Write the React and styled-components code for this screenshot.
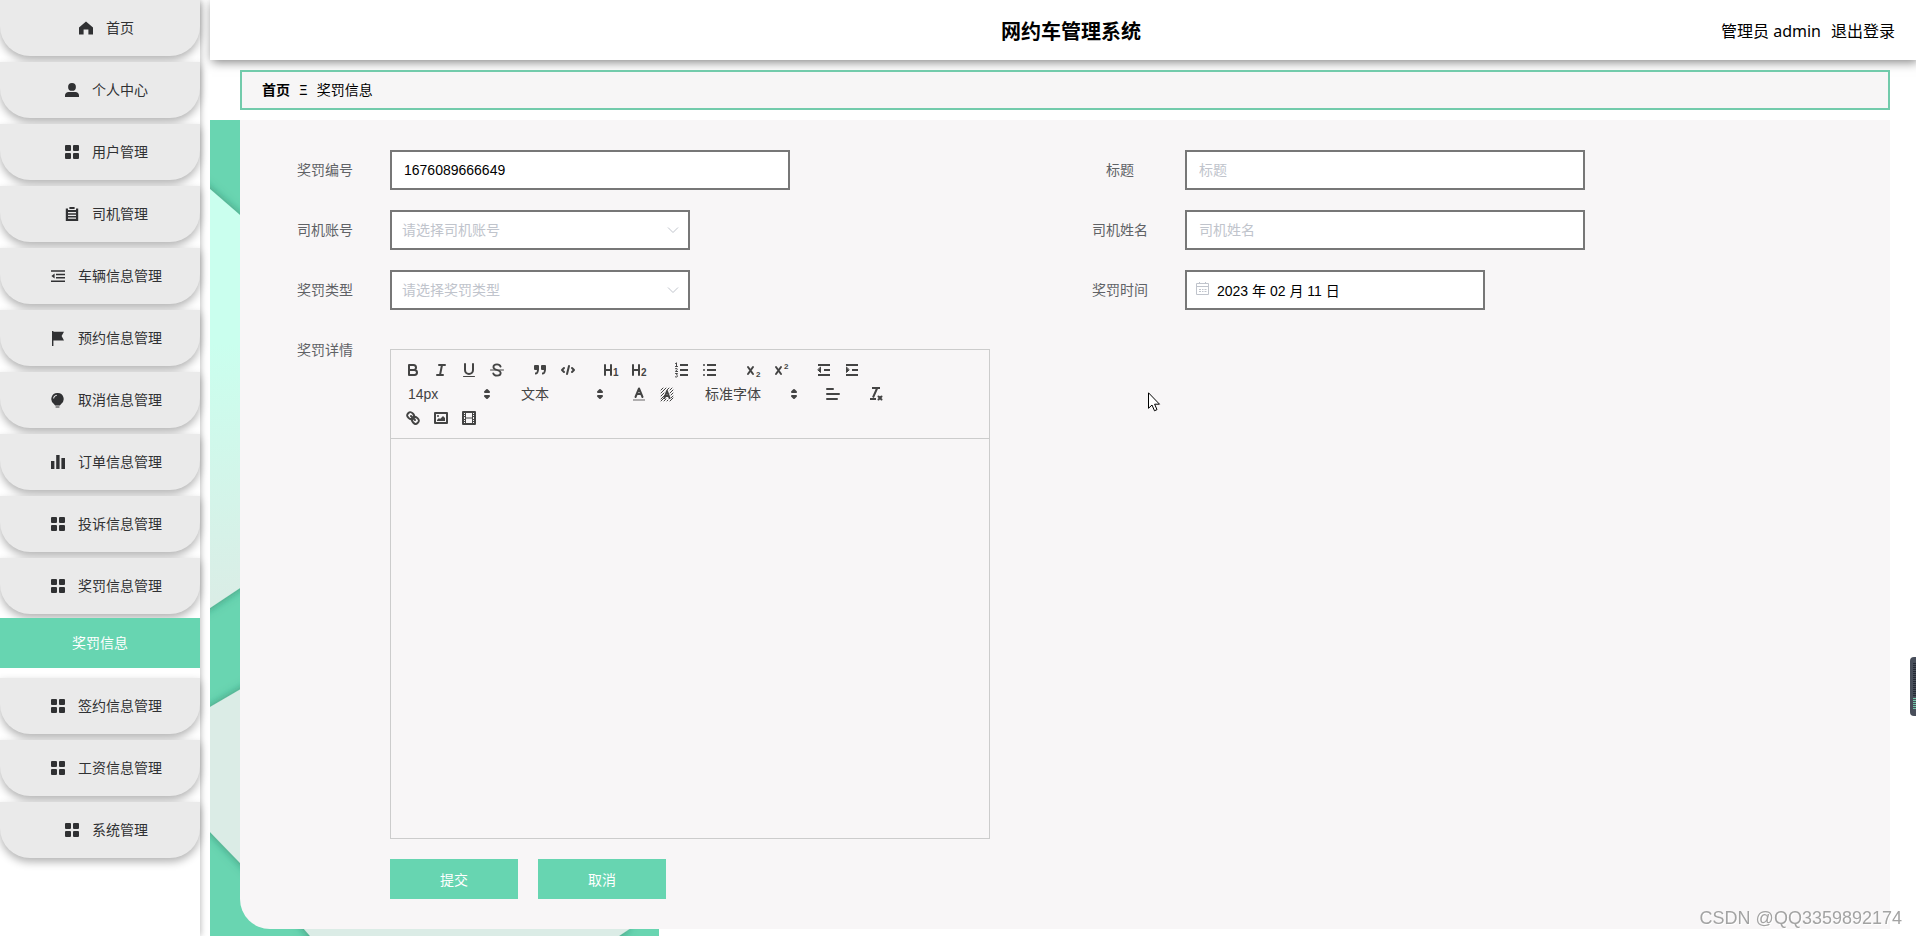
import { useState } from 'react';
import styled, { createGlobalStyle } from 'styled-components';

const GlobalStyle = createGlobalStyle`
    * {
        box-sizing: border-box;
    }
    body {
        margin: 0;
        background: #fff;
        font-family: "Noto Sans", "Noto Sans CJK SC", sans-serif;
        font-size: 14px;
        color: #000;
    }
    button, input, select, textarea {
        font-family: "Liberation Sans", "Noto Sans CJK SC", sans-serif;
        font-size: 14px;
    }
`;

const Page = styled.div`
    display: flex;
    min-height: 100vh;
    overflow: hidden;
`;

const Sidebar = styled.nav`
    width: 200px;
    flex-shrink: 0;
    margin-right: 10px;
    background: #fff;
    box-shadow: 1px 0 6px rgba(0, 0, 0, 0.25);
`;

const Menu = styled.ul`
    list-style: none;
    margin: 0;
    padding: 0;
`;

const MenuItem = styled.li`
    display: flow-root;
    margin-bottom: 6px;
`;

const MenuLink = styled.a`
    display: flex;
    align-items: center;
    justify-content: center;
    gap: 8px;
    height: 56px;
    padding: 0 12px 2px 20px;
    position: relative;
    border-radius: 0 0 30px 30px;
    background: #eaeaea;
    box-shadow: 0 4px 8px rgba(0, 0, 0, 0.3);
    color: #303133;
    text-decoration: none;
`;

const MenuIcon = styled.span`
    display: flex;
    justify-content: center;
    width: 24px;
    padding-top: 2px;
`;

const SubLink = styled.a`
    display: flex;
    align-items: center;
    justify-content: center;
    height: 50px;
    margin: 4px 0;
    padding-bottom: 2px;
    position: relative;
    background: #67d5b1;
    color: #fff;
    text-decoration: none;
`;

const Main = styled.div`
    flex: 1;
    min-width: 0;
    display: flex;
    flex-direction: column;
`;

const Header = styled.header`
    display: grid;
    grid-template-columns: 1fr auto 1fr;
    align-items: center;
    height: 60px;
    padding: 0 21px 0 37px;
    background: #fff;
    box-shadow: 2px 2px 10px rgba(0, 0, 0, 0.5);
    font-size: 16px;
`;

const Title = styled.h1`
    grid-column: 2;
    margin: 0;
    font-size: 20px;
    font-weight: bold;
`;

const UserBox = styled.div`
    display: flex;
    justify-content: flex-end;
    gap: 10px;
    padding-bottom: 1px;
`;

const Logout = styled.a`
    color: #000;
    text-decoration: none;
`;

const Breadcrumb = styled.div`
    display: flex;
    align-items: center;
    height: 40px;
    margin: 10px 26px 10px 30px;
    padding: 0 20px 2px;
    border: 2px solid #72cbab;
    background: #f7f6f6;
`;

const Home = styled.a`
    color: #000;
    font-weight: bold;
    text-decoration: none;
`;

const Separator = styled.span`
    margin: 0 9px;
`;

const Content = styled.main`
    flex: 1;
    position: relative;
    padding: 0 26px 7px 30px;
`;

const Wallpaper = styled.svg`
    position: absolute;
    top: 0;
    left: 0;
    width: 449px;
    height: 100%;
`;

const Card = styled.form`
    position: relative;
    padding: 30px;
    border-radius: 0 0 0 30px;
    background: #f8f6f7;
`;

const Grid = styled.div`
    display: grid;
    grid-template-columns: 1fr 1fr;
    row-gap: 20px;
`;

const Field = styled.div`
    display: flex;
    align-items: flex-start;
`;

const Label = styled.label`
    width: 120px;
    padding-right: 10px;
    flex-shrink: 0;
    line-height: 40px;
    text-align: center;
    color: #606266;
`;

const Control = styled.div`
    display: flex;
    align-items: center;
    width: ${(props) => props.$wide ? "400px" : "300px"};
    height: 40px;
    position: relative;
    border: 2px solid #777;
    background: #fff;
`;

const Input = styled.input`
    width: 100%;
    height: 36px;
    padding: 0 12px;
    padding-left: ${(props) => props.$icon ? "30px" : "12px"};
    border: 0;
    outline: 0;
    background: transparent;
    color: #000;
    &::placeholder {
        color: #c0c4cc;
    }
`;

const Select = styled.select`
    width: 100%;
    height: 36px;
    padding: 0 10px;
    appearance: none;
    border: 0;
    outline: 0;
    background: transparent;
    color: #c0c4cc;
`;

const ControlIcon = styled.span`
    display: flex;
    position: absolute;
    top: ${(props) => props.$side === "left" ? "10px" : "12px"};
    left: ${(props) => props.$side === "left" && "9px"};
    right: ${(props) => props.$side === "right" && "9px"};
    color: #c0c4cc;
    pointer-events: none;
`;

const Editor = styled.div`
    width: 600px;
    margin-top: 19px;
    border: 1px solid #ccc;
`;

const Toolbar = styled.div`
    display: flex;
    flex-wrap: wrap;
    padding: 8px 0 8px 8px;
    border-bottom: 1px solid #ccc;
`;

const Formats = styled.span`
    display: flex;
    margin-right: 15px;
`;

const Tool = styled.button`
    width: 28px;
    height: 24px;
    padding: 3px 5px;
    border: 0;
    background: none;
    cursor: pointer;
    svg {
        display: block;
    }
`;

const Picker = styled.span`
    display: flex;
    align-items: center;
    width: ${(props) => props.$wide ? "108px" : "98px"};
    height: 24px;
    position: relative;
    svg {
        position: absolute;
        right: 1px;
        pointer-events: none;
    }
`;

const PickerSelect = styled.select`
    width: 100%;
    height: 24px;
    padding: 0 9px;
    appearance: none;
    border: 0;
    outline: 0;
    background: transparent;
    color: #444;
`;

const EditArea = styled.textarea`
    display: block;
    width: 100%;
    height: 399px;
    padding: 12px 15px;
    border: 0;
    outline: 0;
    resize: none;
    background: transparent;
`;

const Actions = styled.div`
    display: flex;
    gap: 20px;
    margin: 20px 0 0 120px;
`;

const Button = styled.button`
    width: 128px;
    height: 40px;
    border: 0;
    background: #67d5b1;
    color: #fff;
    cursor: pointer;
`;

const Watermark = styled.div`
    position: fixed;
    right: 14px;
    bottom: 6px;
    font-family: "Liberation Sans", sans-serif;
    font-size: 18px;
    line-height: 24px;
    color: #a3a3a3;
    text-shadow: 1px 1px 0 #fff;
`;

const Gauge = styled.svg`
    position: fixed;
    right: 0;
    top: 657px;
`;

const Pointer = styled.svg`
    position: fixed;
    left: 1148px;
    top: 392px;
    pointer-events: none;
`;

const icons = {
    home: <path d="M7 0.4 14 6.4V13.4H9.4V8.6H4.6V13.4H0V6.4Z" />,
    user: <path d="M7 0a3.9 3.9 0 1 1 0 7.8A3.9 3.9 0 0 1 7 0ZM0 14v-1.500C0 10.200 1.600 9 3.600 9h6.800c2 0 3.600 1.200 3.600 3.500V14Z" />,
    menu: <path d="M1 0h4q1 0 1 1v4q0 1-1 1H1Q0 6 0 5V1Q0 0 1 0ZM9 0h4q1 0 1 1v4q0 1-1 1H9Q8 6 8 5V1Q8 0 9 0ZM1 8h4q1 0 1 1v4q0 1-1 1H1q-1 0-1-1V9q0-1 1-1ZM9 8h4q1 0 1 1v4q0 1-1 1H9q-1 0-1-1V9q0-1 1-1Z" />,
    order: <path fillRule="evenodd" d="M.8 1.4H3V3h8V1.4h2.2V14H.8ZM4.4 0h5.2v2H4.4ZM3 5v1.2h8V5ZM3 7.8V9h8V7.8ZM3 10.6v1.2h8v-1.2Z" />,
    fold: <path d="M0 1.2h14v1.6H0ZM5 4.7h9v1.6H5ZM5 8h9v1.6H5ZM0 11.4h14V13H0ZM3.6 4.6v5L.4 7.1Z" />,
    flag: <path d="M1 0h1.4v.8H13L10.6 5 13 9.4H2.4V15H1Z" />,
    bulb: <path fillRule="evenodd" d="M6.5 0a6 6 0 0 1 3.6 10.9L8.9 12.6H4.1L2.9 10.9A6 6 0 0 1 6.5 0ZM5.8 1.8C3.7 2 2.3 3.5 2.1 5.5l1 .1C3.3 4 4.3 3 5.9 2.8ZM4.6 13.6h3.8v1H4.6Z" />,
    data: <path d="M0 6h3.4v8H0ZM5.2 0h3.4v14H5.2ZM10.4 3H14v11h-3.6Z" />,
};

const menus = [
    { text: '首页', icon: 'home' },
    { text: '个人中心', icon: 'user' },
    { text: '用户管理', icon: 'menu' },
    { text: '司机管理', icon: 'order' },
    { text: '车辆信息管理', icon: 'fold' },
    { text: '预约信息管理', icon: 'flag' },
    { text: '取消信息管理', icon: 'bulb' },
    { text: '订单信息管理', icon: 'data' },
    { text: '投诉信息管理', icon: 'menu' },
    { text: '奖罚信息管理', icon: 'menu', child: '奖罚信息' },
    { text: '签约信息管理', icon: 'menu' },
    { text: '工资信息管理', icon: 'menu' },
    { text: '系统管理', icon: 'menu' },
];

const ToolSvg = ({ children }) => (
    <svg width="18" height="18" viewBox="0 0 18 18" fill="none" stroke="#444" strokeWidth="2" strokeLinecap="round" strokeLinejoin="round">
        {children}
    </svg>
);

const SmallText = ({ x, y, size = 8, children }) => (
    <text x={x} y={y} fill="#444" stroke="none" fontSize={size} fontWeight="bold" fontFamily="Liberation Sans, sans-serif">{children}</text>
);

const indentLines = <path strokeLinecap="butt" d="M3 14H15M3 4H15M9 9H15" />;

const tools = {
    bold: <path d="M5 4H9.5a2.5 2.5 0 0 1 0 5H5ZM5 9h5.5a2.5 2.5 0 0 1 0 5H5Z" />,
    italic: <path d="M7 4H13M5 14H11M8 14 10 4" />,
    underline: <><path d="M5 3V9a4 4 0 0 0 8 0V3" /><path strokeWidth="1" d="M3.5 15.5h11" /></>,
    strike: <><path strokeWidth="1" d="M2.5 9h13" /><path strokeWidth="1.8" d="M12.6 5.6C12 3.9 10.8 3.4 9 3.4 6.8 3.4 5.4 4.4 5.4 6c0 1.7 1.6 2.4 3.6 3s3.7 1.3 3.7 3c0 1.8-1.6 2.7-3.7 2.7S5.6 13.9 5.2 12.3" /></>,
    quote: <><rect fill="#444" x="4" y="5" width="3" height="3" /><rect fill="#444" x="11" y="5" width="3" height="3" /><path strokeLinecap="butt" d="M7 8c0 4-1 4.500-3 4.500M14 8c0 4-1 4.500-3 4.500" /></>,
    code: <path d="M5 7 3 9 5 11M13 7 15 9 13 11M10 5 8 13" />,
    h1: <><path d="M3 4V14M9 4V14M3 9H9" /><SmallText x="11" y="15" size="10">1</SmallText></>,
    h2: <><path d="M3 4V14M9 4V14M3 9H9" /><SmallText x="11" y="15" size="10">2</SmallText></>,
    ordered: <><path strokeLinecap="butt" d="M7 4H15M7 9H15M7 14H15" /><path strokeWidth="1" d="M2.5 2.5 3.5 1.8V5.5M2.5 5.5H4.5M2.5 7.6Q4.5 6.8 4.3 8.3L2.5 10.5H4.6M2.5 12.5H4.5L3.5 14Q4.9 14.5 4.3 15.6 3.5 16.5 2.4 15.9" /></>,
    bullet: <><path strokeLinecap="butt" d="M6 4H15M6 9H15M6 14H15" /><path d="M3 4h0M3 9h0M3 14h0" /></>,
    sub: <><path d="M4 6 9 13M9 6 4 13" /><SmallText x="12" y="16">2</SmallText></>,
    sup: <><path d="M4 6 9 13M9 6 4 13" /><SmallText x="12" y="8">2</SmallText></>,
    outdent: <>{indentLines}<path fill="#444" strokeWidth="1" d="M5.5 6.5V11.5L3 9Z" /></>,
    indent: <>{indentLines}<path fill="#444" strokeWidth="1" d="M3.5 6.5V11.5L6 9Z" /></>,
    color: <><path strokeWidth="2" strokeLinecap="butt" opacity="0.4" d="M3 15H15" /><path d="M5.5 12 9 3.5 12.5 12M6.8 9H11.2" /></>,
    background: <>
        <path strokeWidth="1" d="M3 5 5 3M3 8 8 3M3 11 6 8M9 5 11 3M3 14 7 10M12 5 14 3M3 16 6 13M12 8 15 5M6 16 8 14M13 10 15 8M9 16 10 15M13 13 15 11M12 16 15 13" />
        <path d="M6.500 13 9 6 11.500 13M7.500 11H10.500" />
    </>,
    align: <path d="M3 9H15M3 14H13M3 4H9" />,
    clean: <><path strokeLinecap="butt" d="M5 3H13M6 12.500 10 3.500M3 14H9" /><path d="M11.500 11.500 14.500 14.500M14.500 11.500 11.500 14.500" /></>,
    link: <>
        <path d="M7 7 11 11" />
        <path d="M8.9 4.577a3.476 3.476 0 0 1 .36 4.679A3.476 3.476 0 0 1 4.577 8.900C3.185 7.500 2.035 6.400 4.217 4.217S7.500 3.185 8.900 4.577Z" />
        <path d="M13.423 9.100a3.476 3.476 0 0 0-4.679-.36 3.476 3.476 0 0 0 .36 4.679c1.392 1.392 2.500 2.542 4.679.36S14.815 10.500 13.423 9.100Z" />
    </>,
    image: <><rect x="3" y="4" width="12" height="10" /><circle fill="#444" stroke="none" cx="6" cy="7" r="1" /><path fill="#444" stroke="none" d="M5 12V11L7 9 8 10 11 7 13 9V12Z" /></>,
    video: <><rect x="3" y="3" width="12" height="12" /><path strokeLinecap="butt" d="M5.500 3V15M12.500 3V15M5 9H13" strokeWidth="1" /><path strokeWidth="1" strokeLinecap="butt" d="M3 5.500H6M3 7.500H6M3 10.500H6M3 12.500H6M12 5.500H15M12 7.500H15M12 10.500H15M12 12.500H15" /></>,
};

const Tools = ({ names }) => (
    <Formats>
        {names.map((name) => (
            <Tool key={name} type="button" aria-label={name}>
                <ToolSvg>{tools[name]}</ToolSvg>
            </Tool>
        ))}
    </Formats>
);

const ToolPicker = ({ label, text, wide }) => (
    <Formats>
        <Picker $wide={wide}>
            <PickerSelect aria-label={label}>
                <option>{text}</option>
            </PickerSelect>
            <ToolSvg>
                <path fill="#444" d="M7 11 9 13 11 11ZM7 7 9 5 11 7Z" />
            </ToolSvg>
        </Picker>
    </Formats>
);

const TextField = ({ id, label, value }) => {
    const [text, setText] = useState(value || '');
    return (
        <Field>
            <Label htmlFor={id}>{label}</Label>
            <Control $wide>
                <Input id={id} placeholder={label} value={text} onChange={(e) => setText(e.target.value)} />
            </Control>
        </Field>
    )
}

const SelectField = ({ id, label }) => (
    <Field>
        <Label htmlFor={id}>{label}</Label>
        <Control>
            <Select id={id}>
                <option>请选择{label}</option>
            </Select>
            <ControlIcon $side="right">
                <svg width="12" height="12" viewBox="0 0 12 12" fill="none" stroke="currentColor">
                    <path d="M1 3.500 6 8.500 11 3.500" />
                </svg>
            </ControlIcon>
        </Control>
    </Field>
);

const App = () => {
    const [date, setDate] = useState('2023 年 02 月 11 日');

    return (
        <>
            <GlobalStyle />
            <Page>
                <Sidebar>
                    <Menu>
                        {menus.map((item) => (
                            <MenuItem key={item.text}>
                                <MenuLink href="#">
                                    <MenuIcon>
                                        <svg width="14" height="15" viewBox="0 0 14 15" fill="#303133">{icons[item.icon]}</svg>
                                    </MenuIcon>
                                    {item.text}
                                </MenuLink>
                                {item.child && <SubLink href="#">{item.child}</SubLink>}
                            </MenuItem>
                        ))}
                    </Menu>
                </Sidebar>
                <Main>
                    <Header>
                        <Title>网约车管理系统</Title>
                        <UserBox>
                            <span>管理员 admin</span>
                            <Logout href="#">退出登录</Logout>
                        </UserBox>
                    </Header>
                    <Breadcrumb>
                        <Home href="#">首页</Home>
                        <Separator>Ξ</Separator>
                        <span>奖罚信息</span>
                    </Breadcrumb>
                    <Content>
                        <Wallpaper viewBox="0 0 449 816" preserveAspectRatio="none">
                            <defs>
                                <linearGradient id="mint" x1="0" y1="0" x2="0" y2="1">
                                    <stop offset="0.4" stopColor="#caffee" />
                                    <stop offset="1" stopColor="#dcebe5" />
                                </linearGradient>
                                <filter id="shade" x="-20%" y="-20%" width="140%" height="140%">
                                    <feDropShadow dx="0" dy="0" stdDeviation="5" floodColor="#1d6b53" floodOpacity="0.6" />
                                </filter>
                            </defs>
                            <rect width="449" height="816" fill="#69d5b1" />
                            <g filter="url(#shade)">
                                <path fill="url(#mint)" d="M-40 34 0 69 200 242V355L0 488-40 510Z" />
                                <path fill="#dbece6" d="M-40 610 0 587 60 552 200 640 120 800 60 774 0 712-40 670Z" />
                                <path fill="#dbece6" d="M60 770 100 816V850H370L409 816 421 808 240 700Z" />
                            </g>
                        </Wallpaper>
                        <Card onSubmit={(e) => e.preventDefault()}>
                            <Grid>
                                <TextField id="number" label="奖罚编号" value="1676089666649" />
                                <TextField id="title" label="标题" />
                                <SelectField id="account" label="司机账号" />
                                <TextField id="driver" label="司机姓名" />
                                <SelectField id="type" label="奖罚类型" />
                                <Field>
                                    <Label htmlFor="date">奖罚时间</Label>
                                    <Control>
                                        <ControlIcon $side="left">
                                            <svg width="13" height="13" viewBox="0 0 13 13" fill="none" stroke="currentColor">
                                                <path d="M.5 1.500H12.500V12.500H.5ZM.5 4.500H12.500M3.500 0V2M9.500 0V2M3 7.500H5M6 7.500H7.500M8.500 7.500H10.500M3 9.500H5M6 9.500H7.500M8.500 9.500H10.500" />
                                            </svg>
                                        </ControlIcon>
                                        <Input id="date" $icon value={date} onChange={(e) => setDate(e.target.value)} />
                                    </Control>
                                </Field>
                                <Field>
                                    <Label htmlFor="detail">奖罚详情</Label>
                                    <Editor>
                                        <Toolbar>
                                            <Tools names={['bold', 'italic', 'underline', 'strike']} />
                                            <Tools names={['quote', 'code']} />
                                            <Tools names={['h1', 'h2']} />
                                            <Tools names={['ordered', 'bullet']} />
                                            <Tools names={['sub', 'sup']} />
                                            <Tools names={['outdent', 'indent']} />
                                            <ToolPicker label="size" text="14px" />
                                            <ToolPicker label="header" text="文本" />
                                            <Tools names={['color', 'background']} />
                                            <ToolPicker label="font" text="标准字体" wide />
                                            <Tools names={['align']} />
                                            <Tools names={['clean']} />
                                            <Tools names={['link', 'image', 'video']} />
                                        </Toolbar>
                                        <EditArea id="detail" />
                                    </Editor>
                                </Field>
                            </Grid>
                            <Actions>
                                <Button type="submit">提交</Button>
                                <Button type="button">取消</Button>
                            </Actions>
                        </Card>
                    </Content>
                </Main>
            </Page>
            <Gauge width="6" height="59" viewBox="0 0 6 59">
                <path fill="#484e5a" d="M6 0H4Q0 0 0 4V55Q0 59 4 59H6Z" />
                <path stroke="#252b36" strokeWidth="3" strokeDasharray="1 1" d="M4.500 6V40" />
                <path stroke="#6fc7a8" strokeWidth="3" strokeDasharray="1 1" d="M4.500 41V53" />
            </Gauge>
            <Pointer width="13" height="20" viewBox="0 0 13 20">
                <path fill="#fff" stroke="#000" d="M.5 .8V16.300L4 13 6.500 18.800 9 17.600 6.600 12.200H11.500Z" />
            </Pointer>
            <Watermark>CSDN @QQ3359892174</Watermark>
        </>
    )
}

export default App;
